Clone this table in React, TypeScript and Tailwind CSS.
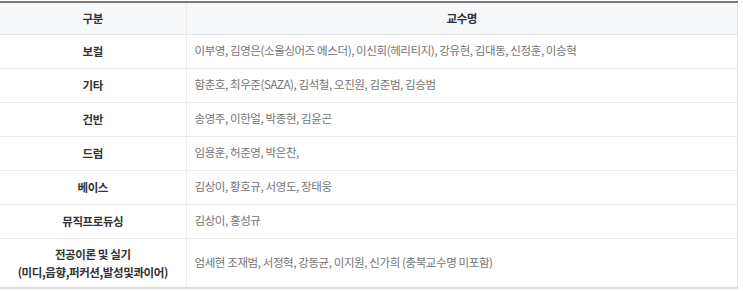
const ROWS: { label: string[]; names: string }[] = [
  { label: ["보컬"], names: "이부영, 김영은(소울싱어즈 에스더), 이신회(헤리티지), 강유현, 김대동, 신정훈, 이승혁" },
  { label: ["기타"], names: "함춘호, 최우준(SAZA), 김석철, 오진원, 김준범, 김승범" },
  { label: ["건반"], names: "송영주, 이한얼, 박종현, 김윤곤" },
  { label: ["드럼"], names: "임용훈, 허준영, 박은찬," },
  { label: ["베이스"], names: "김상이, 황호규, 서영도, 장태웅" },
  { label: ["뮤직프로듀싱"], names: "김상이, 홍성규" },
  { label: ["전공이론 및 실기", "(미디,음향,퍼커션,발성및콰이어)"], names: "엄세현 조재범, 서정혁, 강동균, 이지원, 신가희 (충북교수명 미포함)" },
];

export default function App() {
  return (
    <div className="w-[743px] h-[291px] bg-white pt-px" style={{ fontFamily: '"Noto Sans CJK KR", "Noto Sans", sans-serif' }}>
      <table className="w-[738px] border-collapse text-[11.5px] tracking-[-0.4px]">
        <colgroup>
          <col className="w-[186px]" />
          <col />
        </colgroup>
        <thead>
          <tr className="h-[32px] bg-[#f7f8fa] border-t-2 border-t-[#7a7a7a] border-b border-b-[#e3e3e3]">
            <th className="font-bold text-[#333] text-center border-r border-r-[#ececec]">구분</th>
            <th className="font-bold text-[#333] text-center border-r border-r-[#e3e3e3]">교수명</th>
          </tr>
        </thead>
        <tbody>
          {ROWS.map((r, i) => (
            <tr
              key={i}
              className={`${r.label.length > 1 ? "h-[50px] border-b-2 border-b-[#dcdcdc]" : "h-[34px] border-b border-b-[#ececec]"}`}
            >
              <td className="font-bold text-[#333] text-center leading-[18px] border-r border-r-[#ececec]">
                {r.label.map((l) => (
                  <div key={l}>{l}</div>
                ))}
              </td>
              <td className="text-[#747474] pl-[8px] border-r border-r-[#e3e3e3]">{r.names}</td>
            </tr>
          ))}
        </tbody>
      </table>
    </div>
  );
}
